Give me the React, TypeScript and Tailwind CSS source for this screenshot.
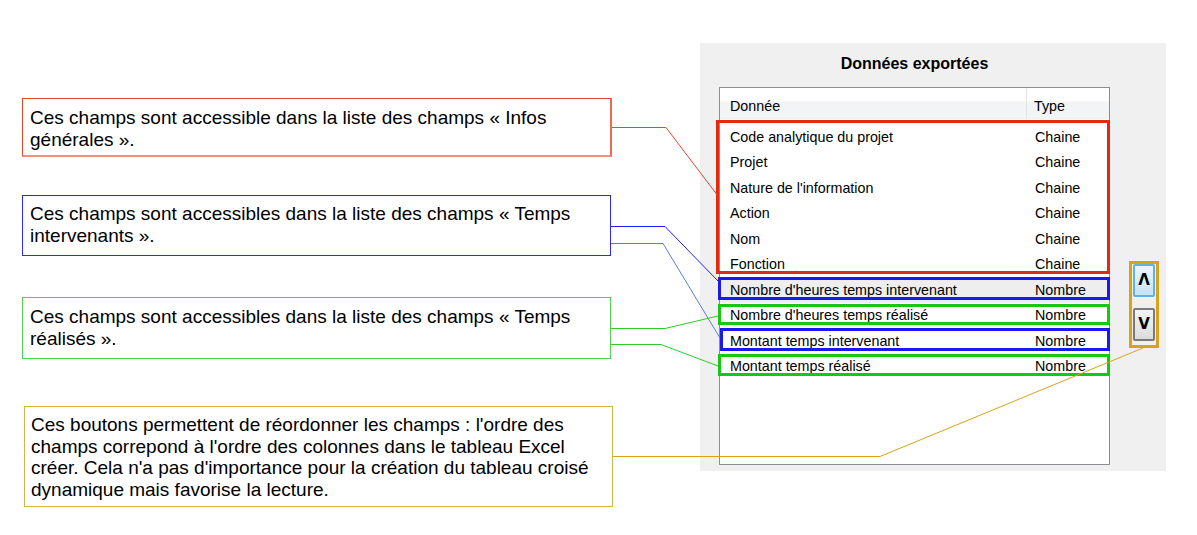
import React from "react";

const rows: { name: string; type: string; selected?: boolean }[] = [
  { name: "Code analytique du projet", type: "Chaine" },
  { name: "Projet", type: "Chaine" },
  { name: "Nature de l'information", type: "Chaine" },
  { name: "Action", type: "Chaine" },
  { name: "Nom", type: "Chaine" },
  { name: "Fonction", type: "Chaine" },
  { name: "Nombre d'heures temps intervenant", type: "Nombre", selected: true },
  { name: "Nombre d'heures temps réalisé", type: "Nombre" },
  { name: "Montant temps intervenant", type: "Nombre" },
  { name: "Montant temps réalisé", type: "Nombre" },
];

function Connectors() {
  return (
    <svg
      className="absolute inset-0 z-10 pointer-events-none"
      width={1197}
      height={535}
      viewBox="0 0 1197 535">
      <polyline points="612,127.5 666,127.5 718,196" fill="none" stroke="#e8452a" strokeWidth={1} />
      <polyline points="611,226.5 665,226.5 718,281" fill="none" stroke="#1f1fff" strokeWidth={1} />
      <polyline points="611,243.5 663,243.5 720,338" fill="none" stroke="#5a7fcb" strokeWidth={1} />
      <polyline points="611,328.5 665,328.5 718,316" fill="none" stroke="#2ccc2c" strokeWidth={1} />
      <polyline points="611,344.5 661,344.5 718,366" fill="none" stroke="#2ccc2c" strokeWidth={1} />
      <polyline points="613,456.5 880,456.5 1143,348" fill="none" stroke="#d9a21b" strokeWidth={1} />
    </svg>
  );
}

function ExportList() {
  return (
    <div className="relative mt-[3px] h-[378px] border border-[#8a8d93] bg-white text-[14.3px] text-black">
      <div className="flex h-[31px] bg-[linear-gradient(to_bottom,#ffffff_40%,#f3f4f6_45%)]">
        <div className="w-[307px] pl-[10px] pt-[8px] border-r border-[#e3e4e6]">Donnée</div>
        <div className="pl-[7px] pt-[8px]">Type</div>
      </div>
      <div className="pt-[5.5px]">
        {rows.map((row, i) => (
          <div
            key={i}
            className={
              row.selected
                ? "flex items-center h-[25.55px] bg-[#eeeeee]"
                : "flex items-center h-[25.55px]"
            }>
            <div className="w-[315px] pl-[10px] whitespace-nowrap">{row.name}</div>
            <div>{row.type}</div>
          </div>
        ))}
      </div>

      {/* surlignages */}
      <div className="absolute left-[-4px] top-[32px] w-[394px] h-[154px] border-[3px] border-[#e3290f]" />
      <div className="absolute left-[-2px] top-[189px] w-[392px] h-[23px] border-[3px] border-[#1a1aee]" />
      <div className="absolute left-[-2px] top-[216px] w-[392px] h-[21px] border-[3px] border-[#14c814]" />
      <div className="absolute left-[0px] top-[240px] w-[390px] h-[23px] border-[3px] border-[#1a1aee]" />
      <div className="absolute left-[-2px] top-[266px] w-[392px] h-[22px] border-[3px] border-[#14c814]" />
    </div>
  );
}

function OrderButtons() {
  return (
    <div className="ml-[19px] mt-[218px] w-[30px] h-[87px] border-[3px] border-[#d9a21b] flex flex-col px-[1px] gap-[11px]">
      <div className="w-[22px] h-[33px] rounded-[2px] border-2 border-[#5cb3e6] bg-[linear-gradient(to_bottom,#eaf6fd,#c6e3f5)] flex items-center justify-center font-['DejaVu_Sans'] font-bold text-[15px] leading-none text-black">
        Λ
      </div>
      <div className="w-[22px] h-[33px] rounded-[2px] border-2 border-[#7a7a7a] bg-[linear-gradient(to_bottom,#f4f4f4,#dcdcdc)] flex items-center justify-center font-['DejaVu_Sans'] font-bold text-[15px] leading-none text-black">
        V
      </div>
    </div>
  );
}

export default function App() {
  return (
    <div className="relative w-[1197px] h-[535px] overflow-hidden bg-white font-['Liberation_Sans',Arial,sans-serif]">
      <Connectors />
      <div className="flex items-start">
        <div className="w-[700px] shrink-0 pl-[22px] pt-[98px] flex flex-col text-[19px] leading-[21.6px] text-black">
          <div className="w-[590px] h-[59px] pl-[7px] pt-[8px] border border-[#e5472c] border-r-2 border-r-[#ec6a52] border-b-2 border-b-[#f0907c]">
            Ces champs sont accessible dans la liste des champs « Infos générales ».
          </div>
          <div className="mt-[38px] w-[589px] h-[61px] pl-[7px] pt-[7px] border border-[#2a2aff]">
            Ces champs sont accessibles dans la liste des champs « Temps intervenants ».
          </div>
          <div className="mt-[41px] w-[589px] h-[62px] pl-[7px] pt-[8px] border border-[#4fd44f]">
            Ces champs sont accessibles dans la liste des champs « Temps réalisés ».
          </div>
          <div className="mt-[47px] ml-[2px] w-[589px] h-[101px] pl-[6px] pt-[7px] border border-[#d9b04a]">
            Ces boutons permettent de réordonner les champs : l'ordre des champs correpond à l'ordre des colonnes dans le tableau Excel créer. Cela n'a pas d'importance pour la création du tableau croisé dynamique mais favorise la lecture.
          </div>
        </div>

        <div className="mt-[43px] w-[466px] h-[428px] shrink-0 bg-[#f0f0f0] flex pl-[19px]">
          <div className="w-[391px] flex flex-col">
            <div className="h-[41px] flex items-center justify-center font-bold text-[16px] text-black">
              Données exportées
            </div>
            <ExportList />
          </div>
          <OrderButtons />
        </div>
      </div>
    </div>
  );
}
